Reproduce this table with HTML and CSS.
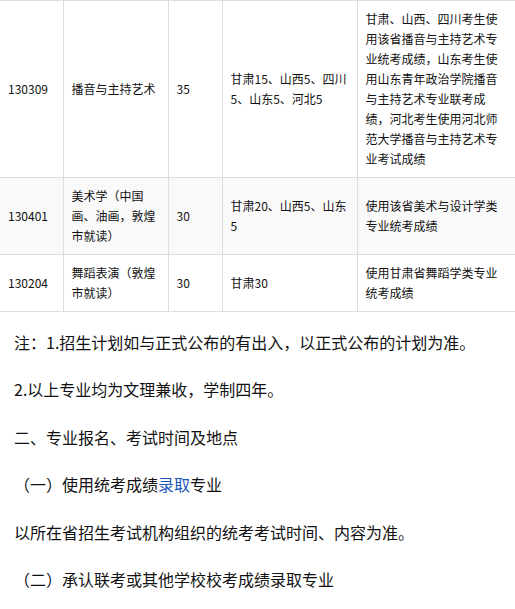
FILE: index.html
```html
<!DOCTYPE html>
<html lang="zh-CN">
<head>
<meta charset="utf-8">
<title>招生计划</title>
<link rel="stylesheet" href="styles.css">
</head>
<body>
<table class="plan">
  <colgroup>
    <col class="c1"><col class="c2"><col class="c3"><col class="c4"><col class="c5">
  </colgroup>
  <tbody>
    <tr>
      <td>130309</td>
      <td>播音与主持艺术</td>
      <td>35</td>
      <td>甘肃15、山西5、四川5、山东5、河北5</td>
      <td>甘肃、山西、四川考生使用该省播音与主持艺术专业统考成绩，山东考生使用山东青年政治学院播音与主持艺术专业联考成绩，河北考生使用河北师范大学播音与主持艺术专业考试成绩</td>
    </tr>
    <tr class="alt">
      <td>130401</td>
      <td>美术学（中国画、油画，敦煌市就读）</td>
      <td>30</td>
      <td>甘肃20、山西5、山东5</td>
      <td>使用该省美术与设计学类专业统考成绩</td>
    </tr>
    <tr>
      <td>130204</td>
      <td>舞蹈表演（敦煌市就读）</td>
      <td>30</td>
      <td>甘肃30</td>
      <td>使用甘肃省舞蹈学类专业统考成绩</td>
    </tr>
  </tbody>
</table>
<div class="notes">
  <p>注：1.招生计划如与正式公布的有出入，以正式公布的计划为准。</p>
  <p>2.以上专业均为文理兼收，学制四年。</p>
  <p>二、专业报名、考试时间及地点</p>
  <p>（一）使用统考成绩<a class="kw" href="#">录取</a>专业</p>
  <p>以所在省招生考试机构组织的统考考试时间、内容为准。</p>
  <p>（二）承认联考或其他学校校考成绩录取专业</p>
</div>
</body>
</html>
```

FILE: styles.css
```css
html, body {
  margin: 0;
  padding: 0;
  background: #fff;
}
body {
  width: 515px;
  font-family: "Noto Sans CJK SC", "Liberation Sans", sans-serif;
  color: #111;
  overflow: hidden;
}
.plan {
  width: 515px;
  border-collapse: collapse;
  table-layout: fixed;
  font-size: 12px;
  line-height: 20px;
}
.plan .c1 { width: 63px; }
.plan .c2 { width: 105px; }
.plan .c3 { width: 54px; }
.plan .c4 { width: 135px; }
.plan .c5 { width: 158px; }
.plan td {
  border: 1px solid #dddddd;
  padding: 8px 8px;
  vertical-align: middle;
  text-align: left;
  word-break: normal;
}
.plan td:first-child {
  border-left: none;
}
.plan tr.alt td {
  background: #f9f9f9;
}
.notes {
  display: flex;
  flex-direction: column;
  gap: 23.4px;
  padding: 18px 0 0 14px;
  font-size: 16px;
  line-height: 24px;
}
.notes p {
  margin: 0;
  white-space: nowrap;
}
.kw {
  color: #1a55b8;
  text-decoration: none;
}
```
